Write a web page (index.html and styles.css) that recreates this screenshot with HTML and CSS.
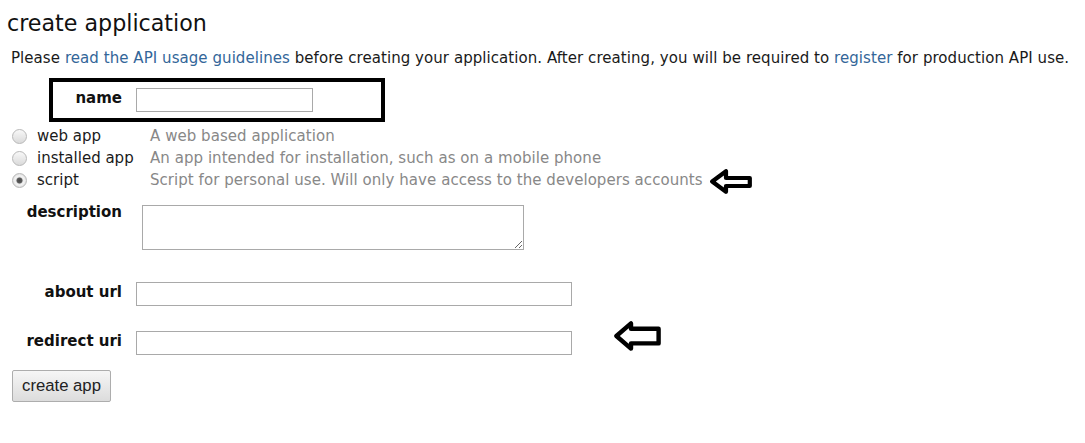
FILE: index.html
```html
<!DOCTYPE html>
<html lang="en">
<head>
  <meta charset="UTF-8">
  <title>create application</title>
  <link rel="stylesheet" href="styles.css">
</head>
<body>
  <h1 class="title">create application</h1>
  <p class="intro">Please <a href="#">read the API usage guidelines</a> before creating your application. After creating, you will be required to <a href="#">register</a> for production API use.</p>

  <form class="app-form">
    <div class="name-box">
      <label class="field-label name-label" for="appName">name</label>
      <input id="appName" class="text-input name-input" type="text">
    </div>

    <ul class="app-types">
      <li class="app-type">
        <input class="radio" type="radio" name="appType" id="typeWeb">
        <label class="type-name" for="typeWeb">web app</label>
        <span class="type-desc">A web based application</span>
      </li>
      <li class="app-type">
        <input class="radio" type="radio" name="appType" id="typeInstalled">
        <label class="type-name" for="typeInstalled">installed app</label>
        <span class="type-desc">An app intended for installation, such as on a mobile phone</span>
      </li>
      <li class="app-type">
        <input class="radio" type="radio" name="appType" id="typeScript" checked>
        <label class="type-name" for="typeScript">script</label>
        <span class="type-desc">Script for personal use. Will only have access to the developers accounts</span>
        <!-- annotation arrow -->
        <svg class="arrow arrow-small" width="42" height="25" viewBox="0 0 42 25">
          <polygon points="2.2,12.5 16,2.2 16,9 39.8,9 39.8,17 16,17 16,22.8" fill="#fff" stroke="#000" stroke-width="4.2" stroke-linejoin="round"/>
        </svg>
      </li>
    </ul>

    <div class="field-row desc-row">
      <label class="field-label desc-label" for="appDesc">description</label>
      <textarea id="appDesc" class="desc-input"></textarea>
    </div>

    <div class="field-row about-row">
      <label class="field-label" for="aboutUrl">about url</label>
      <input id="aboutUrl" class="text-input url-input" type="text">
    </div>

    <div class="field-row redirect-row">
      <label class="field-label" for="redirectUri">redirect uri</label>
      <input id="redirectUri" class="text-input url-input" type="text">
      <svg class="arrow arrow-big" width="47" height="30" viewBox="0 0 47 30">
        <polygon points="2.4,15 17,2.4 17,7.8 44.6,7.8 44.6,22.4 17,22.4 17,27.6" fill="#fff" stroke="#000" stroke-width="4.4" stroke-linejoin="round"/>
      </svg>
    </div>

    <button type="button" class="create-btn">create app</button>
  </form>
</body>
</html>
```

FILE: styles.css
```css
body {
  margin: 0;
  font-family: "DejaVu Sans", Verdana, sans-serif;
  font-size: 15px;
  color: #1a1a1a;
  background: #fff;
}
.title {
  font-size: 22.2px;
  font-weight: normal;
  line-height: 26px;
  margin: 10px 0 0 7px;
  color: #111;
}
.intro { margin: 12px 0 0 11px; line-height: 20px; letter-spacing: 0.06px; }
.intro a { color: #369; text-decoration: none; }

.app-form { margin: 0; }
.field-label {
  font-weight: bold;
  color: #111;
  text-align: right;
  line-height: 20px;
  flex: none;
}
.text-input {
  box-sizing: border-box;
  height: 24px;
  border: 1px solid #a9a9a9;
  padding: 0 4px;
  font: inherit;
  margin: 0;
}

/* name row with the black highlight box */
.name-box {
  box-sizing: border-box;
  width: 336px;
  height: 44px;
  margin: 10px 0 0 49px;
  border: 4px solid #000;
  display: flex;
  align-items: center;
  gap: 14px;
}
.name-label { width: 69px; margin-bottom: 5px; }
.name-input { width: 177px; }

/* app type radios */
.app-types { list-style: none; margin: 3px 0 0 12px; padding: 0; }
.app-type { display: flex; align-items: center; height: 22px; line-height: 22px; white-space: nowrap; }
.radio {
  appearance: none;
  -webkit-appearance: none;
  box-sizing: border-box;
  width: 15px;
  height: 15px;
  margin: 0 10px 0 0;
  border: 1px solid #b8b8b8;
  border-radius: 50%;
  background: linear-gradient(#f8f8f8, #dadada);
  flex: none;
}
.radio:checked {
  background: radial-gradient(circle, #4a4a4a 0, #5a5a5a 2.6px, #e2e2e2 3.4px, #f4f4f4 4.5px, #dcdcdc 7px);
}
.type-name { width: 113px; flex: none; }
.type-desc { color: #888; letter-spacing: 0.05px; }
.arrow { display: block; flex: none; }
.arrow-small { margin: 2px 0 0 7px; }

/* text fields */
.field-row { display: flex; align-items: flex-start; }
.field-row .field-label { width: 122px; }
.desc-row { margin-top: 14px; }
.desc-label { margin-top: -3px; }
.desc-input {
  box-sizing: border-box;
  width: 382px;
  height: 45px;
  margin: 0 0 0 20px;
  border: 1px solid #a9a9a9;
  font: inherit;
}
.about-row { margin-top: 32px; }
.redirect-row { margin-top: 25px; }
.url-input { width: 436px; margin-left: 14px; }
.arrow-big { margin: -10px 0 0 42px; }

.create-btn {
  display: block;
  box-sizing: border-box;
  width: 99px;
  height: 32px;
  margin: 15px 0 0 12px;
  padding: 0;
  font-family: "Liberation Sans", Arial, sans-serif;
  font-size: 16.7px;
  color: #222;
  background: linear-gradient(#f6f6f6, #dcdcdc);
  border: 1px solid #adadad;
  border-radius: 2px;
}
```
